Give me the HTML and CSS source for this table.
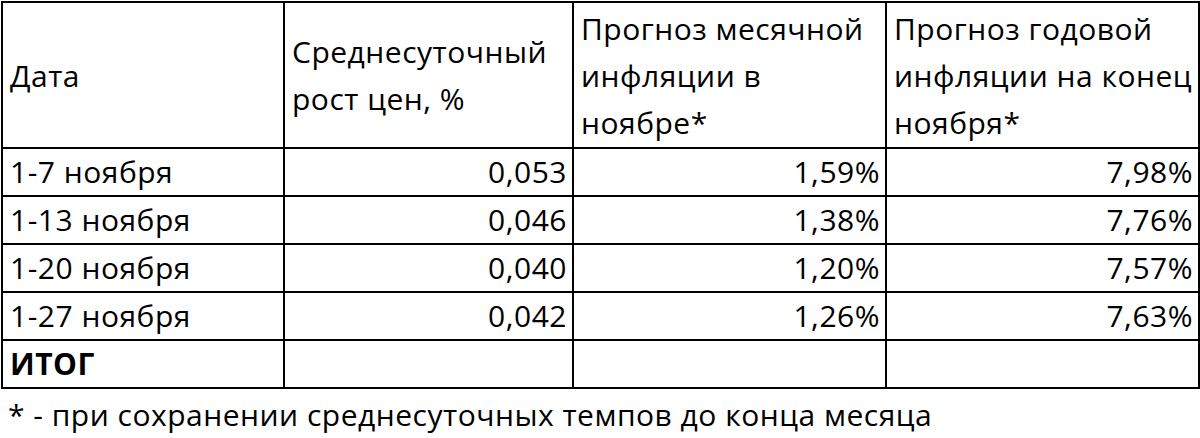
FILE: index.html
```html
<!DOCTYPE html>
<html lang="ru">
<head>
<meta charset="utf-8">
<title>Прогноз инфляции</title>
<link rel="stylesheet" href="styles.css">
</head>
<body>
<table class="grid">
  <colgroup>
    <col class="c1"><col class="c2"><col class="c3"><col class="c4">
  </colgroup>
  <thead>
    <tr class="head">
      <th>Дата</th>
      <th>Среднесуточный<br>рост цен, %</th>
      <th>Прогноз месячной<br>инфляции в<br>ноябре*</th>
      <th>Прогноз годовой<br>инфляции на конец<br>ноября*</th>
    </tr>
  </thead>
  <tbody>
    <tr><td>1-7 ноября</td><td class="num">0,053</td><td class="num">1,59%</td><td class="num">7,98%</td></tr>
    <tr><td>1-13 ноября</td><td class="num">0,046</td><td class="num">1,38%</td><td class="num">7,76%</td></tr>
    <tr><td>1-20 ноября</td><td class="num">0,040</td><td class="num">1,20%</td><td class="num">7,57%</td></tr>
    <tr><td>1-27 ноября</td><td class="num">0,042</td><td class="num">1,26%</td><td class="num">7,63%</td></tr>
    <tr><td class="total">ИТОГ</td><td></td><td></td><td></td></tr>
  </tbody>
</table>
<p class="note">* - при сохранении среднесуточных темпов до конца месяца</p>
</body>
</html>
```

FILE: styles.css
```css
html, body {
  margin: 0;
  padding: 0;
  background: #ffffff;
}
body {
  font-family: "Open Sans", "Liberation Sans", sans-serif;
  font-size: 30px;
  letter-spacing: 0.5px;
  color: #000;
}
.grid {
  border-collapse: collapse;
  width: 1197px;
  table-layout: fixed;
  margin: 1px 0 0 1px;
}
.c1 { width: 282px; }
.c2 { width: 289px; }
.c3 { width: 313px; }
.c4 { width: 313px; }
.grid th, .grid td {
  border: 2px solid #000;
  padding: 0 5px 0 7px;
  vertical-align: middle;
  font-weight: normal;
  text-align: left;
  white-space: nowrap;
}
.head th {
  height: 144px;
  line-height: 47px;
}
.grid td {
  height: 46px;
  line-height: 46px;
}
.grid td.num { text-align: right; }
.grid td.total { font-weight: bold; }
.note {
  margin: 6px 0 0 8px;
  line-height: 40px;
}
```
